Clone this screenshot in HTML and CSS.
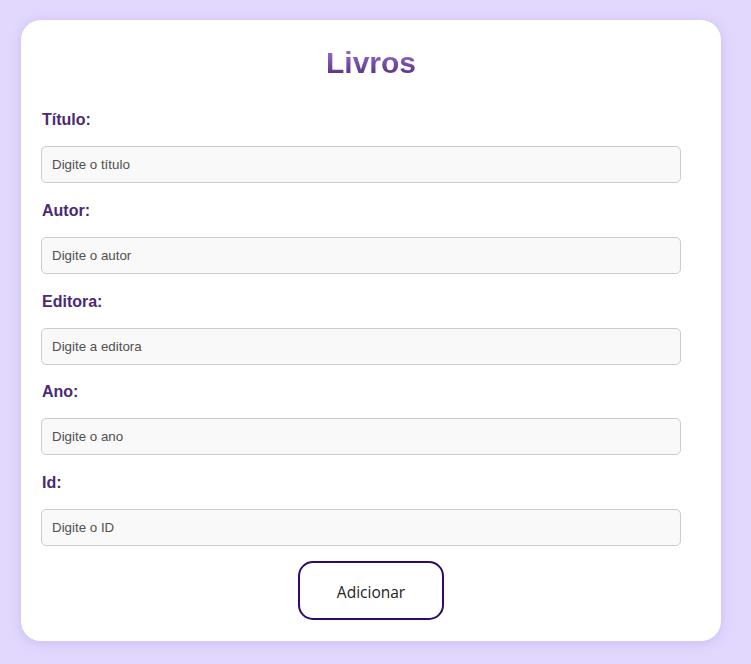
FILE: index.html
```html
<!DOCTYPE html>
<html lang="pt">
<head>
<meta charset="utf-8">
<title>Livros</title>
<link rel="stylesheet" href="styles.css">
</head>
<body>
<main class="card">
  <h1 class="title">Livros</h1>
  <form class="form">
    <div class="field">
      <label class="label" for="titulo">Título:</label>
      <input class="input" id="titulo" type="text" placeholder="Digite o título">
    </div>
    <div class="field">
      <label class="label" for="autor">Autor:</label>
      <input class="input" id="autor" type="text" placeholder="Digite o autor">
    </div>
    <div class="field">
      <label class="label" for="editora">Editora:</label>
      <input class="input" id="editora" type="text" placeholder="Digite a editora">
    </div>
    <div class="field">
      <label class="label" for="ano">Ano:</label>
      <input class="input" id="ano" type="text" placeholder="Digite o ano">
    </div>
    <div class="field">
      <label class="label" for="id">Id:</label>
      <input class="input" id="id" type="text" placeholder="Digite o ID">
    </div>
    <div class="actions">
      <button class="button" type="button">Adicionar</button>
    </div>
  </form>
</main>
</body>
</html>
```
FILE: styles.css
```css
* { box-sizing: border-box; }
html, body { margin: 0; padding: 0; }
body {
  background: #e2d8fd;
  font-family: "Liberation Sans", Arial, sans-serif;
  padding: 20px 30px 23px 21px;
}
.card {
  width: 700px;
  background: #ffffff;
  border-radius: 20px;
  box-shadow: 0 2px 12px rgba(120, 90, 200, 0.22);
  padding: 20px 20px 21px 20px;
}
.title {
  height: 71px;
  margin: 0 auto;
  padding-top: 1px;
  width: 90px;
  text-align: center;
  font-size: 30px;
  font-weight: bold;
  line-height: 44px;
  background: linear-gradient(180deg, #9a6fcc 0%, #8a5fbd 35%, #5a3584 75%, #5a3584 100%);
  background-size: 100% 44px;
  background-repeat: no-repeat;
  background-position: 0 1px;
  -webkit-background-clip: text;
  background-clip: text;
  color: transparent;
}
.form {
  display: flex;
  flex-direction: column;
}
.field {
  display: flex;
  flex-direction: column;
  padding-bottom: 18.75px;
}
.label {
  font-size: 16px;
  font-weight: bold;
  line-height: 18px;
  color: #4a2a72;
  padding-left: 1px;
  margin-bottom: 17px;
}
.input {
  width: 640px;
  height: 37px;
  border: 1px solid #cccccc;
  border-radius: 5px;
  background: #f9f9f9;
  padding: 0 10px;
  font-family: "Liberation Sans", Arial, sans-serif;
  font-size: 13.333px;
  color: #333;
}
.input::placeholder { color: #505050; opacity: 1; }
.actions {
  display: flex;
  justify-content: center;
  margin-top: -4px;
}
.button {
  width: 146px;
  height: 59px;
  border: 2px solid #2c0a6e;
  border-radius: 15px;
  background: #ffffff;
  padding: 3px 0 0 0;
  font-family: "Open Sans", "Noto Sans", sans-serif;
  font-size: 15.5px;
  color: #222222;
  cursor: pointer;
}
```
